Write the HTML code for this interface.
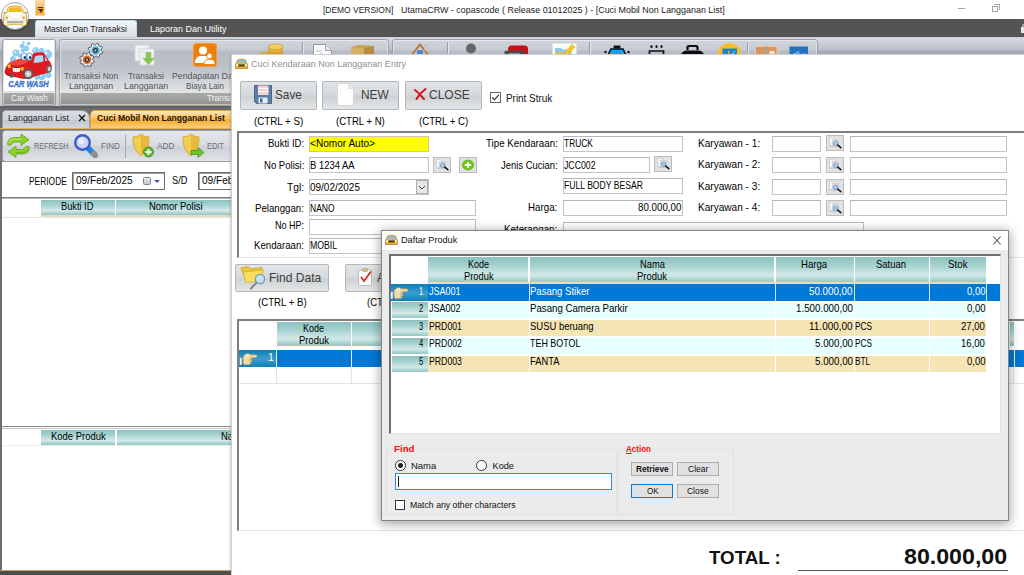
<!DOCTYPE html>
<html lang="id"><head><meta charset="utf-8"><title>UtamaCRW</title>
<style>
*{box-sizing:border-box;margin:0;padding:0}
html,body{width:1024px;height:575px;overflow:hidden;background:#fff}
body{position:relative;font-family:"Liberation Sans",sans-serif;font-size:11px;color:#000;line-height:1}
.a{position:absolute}
.t{position:absolute;white-space:pre;line-height:1;transform-origin:0 0}
svg{position:absolute;overflow:visible}
/* main window */
#titlebar{left:0;top:0;width:1024px;height:19px;background:#fff}
#darkbar{left:0;top:19px;width:1024px;height:18px;background:#545454}
#ribbon{left:0;top:37px;width:1024px;height:69px;background:linear-gradient(#c4c4c6 0,#d6d9e0 1px,#c8ccd4 7px,#b9bdc7 12.9px,#abafb9 13px,#a3a7af 17px,#b4b8c0 30px,#d4d7da 55px,#c8cacc 68px)}
.grp{border:1px solid #9a9ea6;border-radius:3px;background:linear-gradient(#d0d4db 0,#c6cad2 10px,#b7bbc5 11.500px,#bec2ca 28px,#dde1e1 50px,#e2e5e4 53.500px,#a9a9a9 53.500px,#8d8d8d 67px);box-shadow:inset 0 0 0 1px rgba(255,255,255,.45)}
.glab{color:#f4f4f4;font-size:11px}
.rtxt{color:#4a4a52;font-size:10.5px;text-align:center;line-height:11px}
#belowrib{left:0;top:106px;width:1024px;height:4px;background:linear-gradient(#5e5e5e,#707070)}
#tabrow{left:0;top:109px;width:1024px;height:21px;background:#d9dce1}
#toolbar{left:2px;top:130px;width:1022px;height:32px;border:1px solid #9b9fa6;border-radius:3px;background:linear-gradient(#e4e7eb 0,#d9dde2 45%,#cdd1d8 55%,#dfe2e6 100%)}
.tb{color:#6a6a70;font-size:9.5px}
.hdr{background:linear-gradient(#8cc2c0 0,#a7d3d1 35%,#d2e9e7 70%,#8fc5c3 100%);color:#111;text-align:center;font-size:11px}
/* form bits */
.fld{position:absolute;border:1px solid #c0c3ca;border-top-color:#b4b7be;background:#fff;height:16px;font-size:11px;line-height:14px;white-space:pre;padding-left:1px;overflow:hidden}
.lbl{position:absolute;font-size:11px;white-space:pre;text-align:right;line-height:12px}
.sbtn{position:absolute;width:18px;height:16px;border:1px solid #bcbcbc;background:#e2e2e2}
.bigbtn{position:absolute;height:29px;border:1px solid #b3b7bb;border-radius:2px;background:linear-gradient(#e2e5e7 0,#d7dadc 48%,#cdd1d3 52%,#e3e6e7 100%)}
.bigbtn .t{font-size:14.5px;color:#2f2f2f}
.sc{position:absolute;font-size:11px;white-space:pre;text-align:center;width:90px}
.row{position:absolute;left:0;height:18px;font-size:11px;line-height:17px;white-space:pre}
.cell{position:absolute;top:0;height:100%;overflow:hidden}
.wbtn{position:absolute;height:14px;border:1px solid #adadad;background:#e1e1e1;font-size:8.5px;text-align:center;line-height:12px;color:#111}
</style></head><body>
<div id="main" class="a" style="left:0;top:0;width:1024px;height:575px;overflow:hidden">
<div id="titlebar" class="a"></div>
<div class="t" style="left:322.6px;top:4.67px;font-size:9.6px;transform:scaleX(.88);color:#1a1a1a">[DEMO VERSION]</div><div class="t" style="left:400.5px;top:4.67px;font-size:9.6px;transform:scaleX(.93);color:#1a1a1a">UtamaCRW - copascode ( Release 01012025 ) - [Cuci Mobil Non Langganan List]</div>
<div class="a" style="left:958px;top:8px;width:7px;height:1px;background:#a6a6a6"></div>
<div class="a" style="left:992px;top:6px;width:6px;height:6px;border:1px solid #a2a2a2;background:#fdfdfd"></div>
<div class="a" style="left:994px;top:4px;width:6px;height:6px;border-top:1px solid #a8a8a8;border-right:1px solid #a8a8a8"></div>
<div id="darkbar" class="a"></div>
<div class="a" style="left:1021px;top:27px;width:6px;height:6px;background:#e6e6e6"></div><div class="a" style="left:1021.500px;top:22.500px;width:8px;height:8px;border:1.500px solid #e6e6e6;border-radius:4px"></div>
<!-- quick access -->
<div class="a" style="left:35px;top:0;width:10px;height:16px;background:linear-gradient(#fbdcae 0,#f9c079 6.500px,#f5a62c 7px,#f6ae3c 13px,#f9c66c 16px);border:1px solid #f0d3a6;border-top:0"></div>
<div class="a" style="left:38px;top:6.500px;width:5px;height:1.200px;background:#3a3a3a"></div>
<div class="a" style="left:38px;top:9px;width:5px;height:1.200px;background:#3a3a3a"></div>
<div class="a" style="left:38.500px;top:10px;width:0;height:0;border-left:2px solid transparent;border-right:2px solid transparent;border-top:3.500px solid #3a3a3a"></div>
<!-- active ribbon tab -->
<div class="a" style="left:35px;top:20px;width:102px;height:18px;background:linear-gradient(#f2f5f8,#e3e6ea 60%,#d9dce1);border-radius:3px 3px 0 0;border:1px solid #b9e0e6;border-bottom:0"></div>
<div class="t" style="left:44.4px;top:24.04px;font-size:9.4px;transform:scaleX(.91);color:#1c1c28">Master Dan Transaksi</div>
<div class="t" style="left:150px;top:24.04px;font-size:9.4px;transform:scaleX(.96);color:#fff">Laporan Dan Utility</div>
<div id="ribbon" class="a"></div>
<!-- orb -->
<div class="a" style="left:1px;top:2px;width:28px;height:28px;border-radius:50%;background:radial-gradient(circle at 50% 40%,#fff 0,#fcfcfc 60%,#e6e6e6 100%);border:1px solid #a9a9a9;box-shadow:0 1px 1.500px rgba(0,0,0,.35)"></div>
<svg style="left:3px;top:5px" width="25" height="22" viewBox="3 5 25 22">
<path d="M8 8.500 Q8.500 6.300 10.500 6.300 H19.700 Q21.700 6.300 22.300 8.500 L23.300 12 Q26.500 12.300 26.500 16 V23.500 Q26.500 25.300 25 25.300 H22.500 Q21.500 25.300 21.300 24.300 H9 Q8.800 25.300 7.800 25.300 H5.300 Q3.800 25.300 3.800 23.500 V16 Q3.800 12.300 7 12 Z" fill="#fdfdfa" stroke="#d9a826" stroke-width="1"/>
<path d="M9 8.700 Q9.300 7.300 10.700 7.300 H19.500 Q20.900 7.300 21.300 8.700 L22.200 11.900 H8.100 Z" fill="#f9b91e"/>
<path d="M3.600 12.600 H7 M23.300 12.600 H26.800" stroke="#b99a3a" stroke-width="1.300"/>
<path d="M8.500 13 Q10 18.300 12 18.500 H18.300 Q20.300 18.300 21.800 13" fill="none" stroke="#e9e6da" stroke-width=".9"/>
<circle cx="6.700" cy="17.800" r="1.300" fill="#cfa02c"/><circle cx="23.700" cy="17.800" r="1.300" fill="#cfa02c"/>
<circle cx="6.700" cy="17.800" r="2.300" fill="none" stroke="#e6e2d4" stroke-width=".7"/><circle cx="23.700" cy="17.800" r="2.300" fill="none" stroke="#e6e2d4" stroke-width=".7"/>
<rect x="7" y="21.200" width="16.400" height="1.900" fill="#a9ae98"/>
<path d="M5 20.500 H25.500 M5 23.700 H25.500" stroke="#d8d4c0" stroke-width=".6"/>
</svg>
<!-- group 1: Car Wash -->
<div class="a grp" style="left:2px;top:39px;width:54px;height:67px"></div>
<div class="a" style="left:3.500px;top:40px;width:50.500px;height:50.500px;background:#fff"></div>
<svg style="left:3px;top:40px" width="52" height="51" viewBox="3 40 52 51">
<g fill="#8fd0f6" stroke="#5fb4ea" stroke-width=".5"><circle cx="22" cy="46" r="2"/><circle cx="26" cy="48.500" r="2.600"/><circle cx="28.500" cy="43.500" r="1.600"/><circle cx="23.500" cy="42.500" r="1"/><circle cx="22.500" cy="50.500" r="1.500"/><circle cx="16" cy="53" r="3.200"/><circle cx="20.500" cy="56" r="2"/><circle cx="13" cy="59" r="2.600"/><circle cx="35.500" cy="50.500" r="3"/><circle cx="41.500" cy="50.500" r="2.200"/><circle cx="47.500" cy="54.500" r="4.300"/><circle cx="11" cy="63" r="1.500"/><circle cx="45" cy="71" r="3"/><circle cx="48.500" cy="75" r="2.600"/><circle cx="42" cy="76.500" r="3.200"/><circle cx="37" cy="77.500" r="2.200"/><circle cx="50" cy="66.500" r="2"/><circle cx="30" cy="88.500" r=".8"/></g>
<g fill="#fff" fill-opacity=".75"><circle cx="46" cy="53" r="1.500"/><circle cx="15" cy="52" r="1.100"/><circle cx="34.500" cy="49.500" r="1"/><circle cx="41" cy="75.500" r="1.100"/></g>
<path d="M4.500 72 Q5.500 66 9 63 Q14 60 22 58.500 Q26 58 30 60 L33 53.500 Q38 51.500 43.500 52.500 L48.500 60 Q52 63 51.500 68 Q51 72 47 73 L36 76 Q30 79 24 79 L12 76.500 Q5 76 4.500 72 Z" fill="#e01a1e"/>
<path d="M9 63 Q14 60 22 58.500 Q26 58 30 60 Q26 64 20 65.500 Q12 66 9 63 Z" fill="#f2443c"/>
<path d="M35 56.500 Q39 54.500 43 55.500 L43.500 61.500 Q39 62.500 33.500 63 Z" fill="#a6dcf6"/>
<path d="M45 56.500 L47.500 60.500 L45 61 Z" fill="#a6dcf6"/>
<ellipse cx="24" cy="56.500" rx="2.700" ry="3.700" fill="#fff" stroke="#2a74c8" stroke-width=".7"/><ellipse cx="29.600" cy="56.500" rx="2.700" ry="3.700" fill="#fff" stroke="#2a74c8" stroke-width=".7"/>
<ellipse cx="24.800" cy="57.500" rx="1.300" ry="1.800" fill="#1f5fb4"/><ellipse cx="30.200" cy="57.500" rx="1.300" ry="1.800" fill="#1f5fb4"/><circle cx="24.800" cy="57.800" r=".7" fill="#0a1a30"/><circle cx="30.200" cy="57.800" r=".7" fill="#0a1a30"/>
<path d="M12.500 67 Q16.500 68.500 20.500 67.500 L20 71.500 Q16 73 13 71.500 Z" fill="#fff"/><path d="M14.500 67.500 v4 M16.500 68 v4 M18.500 68 v4" stroke="#c8ccd0" stroke-width=".5"/>
<path d="M11 66 Q17 70 24 65" fill="none" stroke="#7a0a0e" stroke-width=".7"/>
<ellipse cx="9.300" cy="66.200" rx="1.500" ry="2" fill="#f8c820" stroke="#d89a10" stroke-width=".4"/><ellipse cx="22.400" cy="68.700" rx="1.500" ry="2" fill="#f8c820" stroke="#d89a10" stroke-width=".4"/>
<path d="M5 71 Q8 74.500 12 74.500 L12 76.500 Q6 76 5 71 Z" fill="#b01216"/>
<circle cx="28.200" cy="74" r="5.200" fill="#5c5c5c"/><circle cx="28.200" cy="74" r="3.300" fill="#c9c9c9"/><circle cx="28.200" cy="74" r="1.400" fill="#efefef"/>
<circle cx="11.500" cy="75.500" r="2.200" fill="#5c5c5c"/>
<ellipse cx="49" cy="69" rx="2.800" ry="3.800" fill="#6a6a6a"/><ellipse cx="49.300" cy="69" rx="1.500" ry="2.300" fill="#cfcfcf"/>
<text x="8.300" y="87" font-family="Liberation Sans,sans-serif" font-weight="bold" font-style="italic" font-size="9" fill="#3b7bd4" stroke="#2a5fb4" stroke-width=".3" textLength="40.400" lengthAdjust="spacingAndGlyphs">CAR WASH</text>
</svg>
<div class="t" style="left:10.6px;top:93.81px;font-size:9.2px;transform:scaleX(.91);color:#f4f4f4">Car Wash</div>
<!-- group 2 -->
<div class="a grp" style="left:59px;top:39px;width:330px;height:67px"></div><div class="a grp" style="left:392px;top:39px;width:426px;height:67px"></div>
<div class="t" style="left:206.9px;top:93.81px;font-size:9.2px;transform:scaleX(.91);color:#f4f4f4">Transaksi</div>
<!-- ribbon item 1 gears -->
<svg style="left:78px;top:42px" width="26" height="27" viewBox="0 0 26 27"><path d="M24.8 10.0 L24.3 11.4 L22.2 11.7 L21.5 12.5 L21.6 14.7 L20.3 15.3 L18.6 14.1 L17.5 14.2 L16.0 15.8 L14.6 15.3 L14.3 13.2 L13.5 12.5 L11.3 12.6 L10.7 11.3 L11.9 9.6 L11.8 8.5 L10.2 7.0 L10.7 5.6 L12.8 5.3 L13.5 4.5 L13.4 2.3 L14.7 1.7 L16.4 2.9 L17.5 2.8 L19.0 1.2 L20.4 1.7 L20.7 3.8 L21.5 4.5 L23.7 4.4 L24.3 5.7 L23.1 7.4 L23.2 8.5 Z" fill="#ececec" stroke="#4e4e4e" stroke-width=".9" stroke-linejoin="round"/><path d="M16.3 19.3 L15.8 20.7 L13.7 21.0 L13.0 21.8 L13.1 24.0 L11.8 24.6 L10.1 23.4 L9.0 23.5 L7.5 25.1 L6.1 24.6 L5.8 22.5 L5.0 21.8 L2.8 21.9 L2.2 20.6 L3.4 18.9 L3.3 17.8 L1.7 16.3 L2.2 14.9 L4.3 14.6 L5.0 13.8 L4.9 11.6 L6.2 11.0 L7.9 12.2 L9.0 12.1 L10.5 10.5 L11.9 11.0 L12.2 13.1 L13.0 13.8 L15.2 13.7 L15.8 15.0 L14.6 16.7 L14.7 17.8 Z" fill="#ececec" stroke="#4e4e4e" stroke-width=".9" stroke-linejoin="round"/><circle cx="17.500" cy="8.500" r="3.300" fill="#333" stroke="#3fb0e4" stroke-width="1.800"/><circle cx="9" cy="17.800" r="3.300" fill="#333" stroke="#e2661c" stroke-width="1.800"/><circle cx="17.500" cy="8.500" r="1" fill="#ddd"/><circle cx="9" cy="17.800" r="1" fill="#ddd"/></svg>
<div class="t" style="left:64.4px;top:71.06px;font-size:9.5px;transform:scaleX(.89);color:#55555c">Transaksi Non</div><div class="t" style="left:69.4px;top:81.06px;font-size:9.5px;transform:scaleX(.93);color:#55555c">Langganan</div>
<!-- ribbon item 2 docs w/ arrow -->
<svg style="left:134px;top:44px" width="22" height="23" viewBox="0 0 22 23"><rect x="1" y="1" width="14" height="16" fill="#f0f1f0" stroke="#d4d7d6"/><rect x="6" y="5" width="14" height="16" fill="#f4f5f4" stroke="#d4d7d6"/><path d="M3 5h9M3 8h9M3 11h3M8 9h10M8 12h10M8 15h10M8 18h10" stroke="#dfe2e0" stroke-width="1"/><path d="M12 8 h5 v6 h3.500 l-6 7 l-6 -7 h3.500 z" fill="#86c653" stroke="#a9d88a" stroke-width=".6"/></svg>
<div class="t" style="left:128.1px;top:71.06px;font-size:9.5px;transform:scaleX(.88);color:#55555c">Transaksi</div><div class="t" style="left:123.5px;top:81.06px;font-size:9.5px;transform:scaleX(.93);color:#55555c">Langganan</div>
<!-- ribbon item 3 orange people -->
<div class="a" style="left:193px;top:43px;width:24px;height:24px;background:#f07f09;border-radius:3px;border:1px solid #f59a3c"></div>
<svg style="left:193px;top:43px" width="24" height="24" viewBox="0 0 24 24"><circle cx="10" cy="7.500" r="4" fill="#fff"/><path d="M2 20 Q2 14 7 13 L13 13 Q16 14 16 17 L12 20 Z" fill="#fff"/><circle cx="16.500" cy="13" r="2.700" fill="#fff" stroke="#f07f09" stroke-width=".8"/><path d="M11 21.500 Q11 17 14 16.500 L19 16.500 Q22 17 22 21.500 Z" fill="#fff" stroke="#f07f09" stroke-width=".8"/></svg>
<div class="t" style="left:172.1px;top:71.06px;font-size:9.5px;transform:scaleX(.92);color:#55555c">Pendapatan Dan</div><div class="t" style="left:186px;top:81.06px;font-size:9.5px;transform:scaleX(.86);color:#55555c">Biaya Lain</div>
<!-- partially visible icons row (y 38-55) -->
<div class="a" style="left:302px;top:42px;width:2px;height:48px;background:linear-gradient(90deg,#989ca4 50%,#e4e7ea 50%)"></div>
<div class="a" style="left:447px;top:42px;width:2px;height:48px;background:linear-gradient(90deg,#989ca4 50%,#e4e7ea 50%)"></div>
<div class="a" style="left:589px;top:42px;width:2px;height:48px;background:linear-gradient(90deg,#989ca4 50%,#e4e7ea 50%)"></div>
<div class="a" style="left:747px;top:42px;width:2px;height:48px;background:linear-gradient(90deg,#989ca4 50%,#e4e7ea 50%)"></div>
<svg style="left:0;top:37px" width="1024" height="20" viewBox="0 37 1024 20">
<g stroke="#c8901c" stroke-width=".6"><ellipse cx="265" cy="55" rx="6.500" ry="2.600" fill="#e8b030"/><ellipse cx="275.500" cy="53" rx="7.300" ry="2.800" fill="#dca324"/><ellipse cx="275.500" cy="50" rx="7.300" ry="2.800" fill="#e9b534"/><ellipse cx="275.500" cy="46.800" rx="7.300" ry="2.800" fill="#f4cf5c"/></g>
<path d="M313.500 44.500 h12 l6 6 v8 h-18 z" fill="#fbfbfb" stroke="#8e8e8e" stroke-width=".9"/><path d="M325.500 44.500 v6 h6" fill="#e8e8e8" stroke="#8e8e8e" stroke-width=".8"/><path d="M316 51h6" stroke="#aaa" stroke-width=".8"/><circle cx="321" cy="54.500" r="1" fill="#3a6ac8"/>
<path d="M351 47 l8 -2 l15 1 v11 h-23 z" fill="#c9a050"/><path d="M351 47 l13 1.500 v9 h-13 z" fill="#d6b064"/><path d="M364 48.500 l10 -2.500 v11 h-10 z" fill="#b88c3c"/>
<path d="M410.500 56.500 L420 44.500 L429.500 56.500" fill="none" stroke="#b5773a" stroke-width="2"/><rect x="424.500" y="45.500" width="1.800" height="5" fill="#e8dcc8" stroke="#b0a088" stroke-width=".4"/><path d="M414 57 L420 49 L426 57 Z" fill="#f3f0ea"/><rect x="417.500" y="50.500" width="5" height="4.500" rx=".8" fill="#3a8ae0" stroke="#2a62b0" stroke-width=".6"/>
<circle cx="471" cy="48.500" r="5" fill="#666"/>
<path d="M508 49 q0 -3.500 3.500 -3.500 h13 q3.500 0 3.500 3.500 v8 h-20 z" fill="#c8101c"/><rect x="504.500" y="50.800" width="20.500" height="7" rx="1" fill="#4a4a4a"/><rect x="509" y="53.500" width="11" height="4" fill="#c9c9c9"/>
<rect x="552.500" y="43.500" width="24" height="14" fill="#fdfdf8" stroke="#e0e0d8" stroke-width=".6"/><path d="M555 48 h6 l1.500 1.500 h9 v8 h-16.500 z" fill="#8fc4ee"/><rect x="556" y="52" width="7" height="5" fill="#d8c83a"/><path d="M562 55.500 L572 44.500 L575 47 L565 58 Z" fill="#f6c818" stroke="#d8a010" stroke-width=".5"/>
<path d="M608 55 L611 49 h12 l3 6 Z" fill="#1aa0ec" stroke="#111" stroke-width="1.500"/><rect x="613.500" y="45.500" width="7" height="3" rx="1" fill="#111"/><circle cx="605.500" cy="52" r="1.200" fill="#111"/><circle cx="628.500" cy="52" r="1.200" fill="#111"/><path d="M606 55.500 h22" stroke="#111" stroke-width="1.500"/>
<path d="M649.500 57 v-6 h14 v6" fill="none" stroke="#111" stroke-width="1.700"/><ellipse cx="651.500" cy="46.500" rx="1.100" ry="1.600" fill="#111"/><ellipse cx="656.500" cy="46.500" rx="1.100" ry="1.600" fill="#111"/><ellipse cx="661.500" cy="46.500" rx="1.100" ry="1.600" fill="#111"/>
<path d="M680 57 Q681 51.500 686 50.500 h13 Q704 51.500 705 57 Z" fill="#0c0c0c"/><path d="M687.500 50 v-2.500 q0 -1.500 1.500 -1.500 h7 q1.500 0 1.500 1.500 v2.500" fill="none" stroke="#0c0c0c" stroke-width="2.200"/>
<circle cx="729.400" cy="55" r="12" fill="#f6bc2c"/><rect x="722.500" y="48.500" width="14.500" height="9" fill="#1f86c4"/><rect x="728" y="50.500" width="1.500" height="4" fill="#f2a23a"/><path d="M732 54 l3 -3" stroke="#d8eefc" stroke-width=".8"/>
<rect x="755.500" y="46.500" width="21.500" height="12" rx="2" fill="#d9955a" stroke="#eec9a6" stroke-width="1"/><rect x="763.500" y="46.500" width="4.500" height="12" fill="#b8a090" fill-opacity=".75"/><rect x="769.500" y="51" width="5" height="4" fill="#efe6da"/>
<rect x="789.500" y="46.500" width="18.500" height="12" fill="#2272c0"/><path d="M794 58 v-4 l4.500 -2 v6 M800 58 v-3.500 h4 l1 -1.500" fill="none" stroke="#8ab6e2" stroke-width="1.300"/>
</svg>
<div id="belowrib" class="a"></div>
<!-- document tabs -->
<div id="tabrow" class="a" style="background:#6c6c6c"></div>
<div class="a" style="left:2px;top:110px;width:88px;height:18px;background:linear-gradient(#d9dce2,#cfd3da 50%,#c3c7cf 55%,#d3d6dc);border:1px solid #9a9ea6;border-bottom:0;border-radius:4px 8px 0 0"></div>
<div class="t" style="left:7.8px;top:113.63px;font-size:9.3px;transform:scaleX(.96);color:#1e1e2c">Langganan List</div>
<svg style="left:78px;top:114px" width="8" height="8" viewBox="0 0 8 8"><path d="M1 1 L7 7 M7 1 L1 7" stroke="#111" stroke-width="1.3"/></svg>
<div class="a" style="left:90px;top:110px;width:146px;height:20px;background:linear-gradient(#fde7c0 0,#fbc45e 35%,#f9b23a 55%,#fdd68c 100%);border:1px solid #e2a24a;border-bottom:0;border-radius:5px 5px 0 0"></div>
<div class="t" style="left:96.5px;top:113.63px;font-size:9.3px;transform:scaleX(.92);font-weight:bold;color:#17130a">Cuci Mobil Non Langganan List</div>
<div class="a" style="left:0;top:128px;width:1024px;height:1px;background:#f0b050"></div>
<div class="a" style="left:0;top:129px;width:1024px;height:2px;background:#7a7a7a"></div>
<!-- toolbar -->
<div class="a" style="left:0;top:130px;width:1024px;height:33px;background:#787878"></div>
<div id="toolbar" class="a"></div>
<svg style="left:6px;top:133px" width="25" height="26" viewBox="0 0 25 26"><path d="M1.500 11.500 Q1.500 4.500 9 4.500 L15 4.500 L15 1 L23 6.700 L15 12.400 L15 9 L9 9 Q6 9 5.800 11.500 Q3.500 12.800 1.500 11.500 Z" fill="#8fd12c" stroke="#62a314" stroke-width=".8"/><path d="M23.500 14 Q23.500 21 16 21 L10 21 L10 24.500 L2 18.800 L10 13.100 L10 16.500 L16 16.500 Q19 16.500 19.200 14 Q21.500 12.700 23.500 14 Z" fill="#8fd12c" stroke="#62a314" stroke-width=".8"/><path d="M3 10 Q3.500 6 9 6 L15.500 6" stroke="#c4ec7a" stroke-width="1" fill="none"/><path d="M22 15.500 Q21.500 19.500 16 19.500 L9.500 19.500" stroke="#6fb01c" stroke-width="1" fill="none"/></svg>
<div class="t" style="left:33.5px;top:141.89px;font-size:8.4px;transform:scaleX(.86);color:#6a6a72">REFRESH</div>
<svg style="left:73px;top:133px" width="27" height="27" viewBox="0 0 27 27"><path d="M14 14 L22 22" stroke="#1c86e0" stroke-width="5.600" stroke-linecap="round"/><path d="M20.800 20.800 L22.300 22.300" stroke="#909090" stroke-width="5.600" stroke-linecap="round"/><circle cx="9.500" cy="9.500" r="7.300" fill="#cdd0fa" stroke="#3a5ccc" stroke-width="2.400"/><circle cx="8.300" cy="8" r="3.300" fill="#e6e6ff"/></svg>
<div class="t" style="left:101px;top:141.89px;font-size:8.4px;transform:scaleX(.96);color:#6a6a72">FIND</div>
<div class="a" style="left:125px;top:135px;width:1px;height:23px;background:#a6aab0"></div>
<svg style="left:131px;top:133px" width="24" height="26" viewBox="0 0 24 26"><path d="M2 4 Q7 4 10 1 Q13 4 18 4 Q19 16 10 23 Q1 16 2 4 Z" fill="#f2cd52" stroke="#c9a02a" stroke-width=".8"/><path d="M10 1 Q13 4 18 4 Q19 16 10 23 Z" fill="#e6b93a"/><circle cx="17.500" cy="19" r="5" fill="#5cb82e" stroke="#2f8a12" stroke-width=".8"/><path d="M17.500 16 v6 M14.500 19 h6" stroke="#fff" stroke-width="1.800"/></svg>
<div class="t" style="left:157px;top:141.89px;font-size:8.4px;transform:scaleX(.98);color:#6a6a72">ADD</div>
<svg style="left:181px;top:133px" width="24" height="26" viewBox="0 0 24 26"><path d="M2 4 Q7 4 10 1 Q13 4 18 4 Q19 16 10 23 Q1 16 2 4 Z" fill="#f2cd52" stroke="#c9a02a" stroke-width=".8"/><path d="M10 1 Q13 4 18 4 Q19 16 10 23 Z" fill="#e6b93a"/><path d="M10 17.500 h7 v-3 l6 5 l-6 5 v-3 h-7 z" fill="#6cc430" stroke="#3a8f14" stroke-width=".7"/></svg>
<div class="t" style="left:207px;top:141.89px;font-size:8.4px;transform:scaleX(.88);color:#6a6a72">EDIT</div>
<!-- content -->
<div class="a" style="left:0;top:162px;width:2px;height:413px;background:#6e6e6e"></div>
<div class="a" style="left:2px;top:162px;width:1022px;height:409px;background:#fff"></div>
<div class="t" style="left:28.8px;top:176.11px;font-size:10.5px;transform:scaleX(.8);">PERIODE</div>
<div class="a" style="left:72px;top:172px;width:93px;height:18px;border:1px solid #6d6d6d;box-shadow:inset 1px 1px 0 #a0a0a0;background:#fff"></div>
<div class="t" style="left:75.5px;top:175.41px;font-size:10.5px;transform:scaleX(.96);">09/Feb/2025</div>
<div class="a" style="left:143px;top:177px;width:8px;height:8px;border:1px solid #7f848c;border-radius:1.500px;background:linear-gradient(#e8eaee,#bfc4cc)"></div>
<div class="a" style="left:154px;top:180px;width:0;height:0;border-left:3px solid transparent;border-right:3px solid transparent;border-top:3px solid #3a5a9a"></div>
<div class="t" style="left:172px;top:174.91px;font-size:10.5px;transform:scaleX(.88);">S/D</div>
<div class="a" style="left:198px;top:172px;width:93px;height:18px;border:1px solid #6d6d6d;box-shadow:inset 1px 1px 0 #a0a0a0;background:#fff"></div>
<div class="t" style="left:202px;top:175.41px;font-size:10.5px;transform:scaleX(.96);">09/Feb/2025</div>
<div class="a" style="left:2px;top:197px;width:1022px;height:2px;background:linear-gradient(#7c7c7c 50%,#b9b9b9 50%)"></div>
<div class="a hdr" style="left:41px;top:200px;width:74px;height:15px"></div><div class="t" style="left:61.3px;top:201.11px;font-size:10.5px;transform:scaleX(.88);">Bukti ID</div>
<div class="a hdr" style="left:116px;top:200px;width:150px;height:15px"></div><div class="t" style="left:148.8px;top:201.11px;font-size:10.5px;transform:scaleX(.9);">Nomor Polisi</div>
<div class="a" style="left:41px;top:215px;width:225px;height:1.500px;background:#e9dcb8"></div>
<div class="a" style="left:2px;top:217px;width:1022px;height:1px;background:#e6e6e6"></div>
<div class="a" style="left:2px;top:426px;width:1022px;height:1px;background:#8a8a8a"></div>
<div class="a" style="left:2px;top:428px;width:1022px;height:1px;background:#c8c8c8"></div>
<div class="a hdr" style="left:41px;top:430px;width:74px;height:15px"></div><div class="t" style="left:50.7px;top:430.51px;font-size:10.5px;transform:scaleX(.9);">Kode Produk</div>
<div class="a hdr" style="left:117px;top:430px;width:230px;height:15px"></div><div class="t" style="left:221.3px;top:430.51px;font-size:10.5px;transform:scaleX(.9);">Nama Produk</div>
<div class="a" style="left:2px;top:445px;width:1022px;height:1px;background:#ececec"></div>
<div class="a" style="left:0;top:570px;width:1024px;height:1px;background:#c8a070"></div>
<div class="a" style="left:0;top:571px;width:1024px;height:4px;background:#4e4e4e"></div>
</div>

<div id="entry" class="a" style="left:228px;top:54px;width:796px;height:521px;overflow:hidden;background:linear-gradient(90deg,rgba(120,120,120,0) 0,rgba(120,120,120,.25) 3px,#9a9a9a 3px,#fff 4px)">
<div class="a" style="left:4px;top:0;width:792px;height:1px;background:#cdcfd4"></div>
<div class="a" style="left:4px;top:1px;width:792px;height:520px;background:#fff"></div>
</div>
<!-- entry contents in page coords -->
<svg style="left:235px;top:59px" width="13" height="10" viewBox="0 0 13 10"><path d="M2.500 1 Q6.500 -0.500 10.500 1 L11.500 4 Q13 4.500 12.500 7 V9.500 H.5 V7 Q0 4.500 1.500 4 Z" fill="#f0b030" stroke="#8a6a2a" stroke-width=".6"/><path d="M3 1.500 Q6.500 0.300 10 1.500 L10.800 3.800 H2.200 Z" fill="#7fc4e8"/><rect x="3.500" y="5.500" width="6" height="2" fill="#3a3a2a"/><rect x=".8" y="5.300" width="2.200" height="1.800" fill="#fff3b0"/><rect x="10" y="5.300" width="2.200" height="1.800" fill="#fff3b0"/></svg>
<div class="t" style="left:250.7px;top:58.87px;font-size:9.6px;transform:scaleX(.94);color:#8f8f8f">Cuci Kendaraan Non Langganan Entry</div>
<!-- big buttons -->
<div class="bigbtn" style="left:240px;top:81px;width:77px"></div>
<div class="bigbtn" style="left:322px;top:81px;width:77px"></div>
<div class="bigbtn" style="left:405px;top:81px;width:77px"></div>
<svg style="left:253.500px;top:85px" width="18" height="19" viewBox="0 0 18 19"><path d="M.5 .5 H17.500 V18.500 H2.500 L.5 16.500 Z" fill="#5b7fa8" stroke="#46668c" stroke-width="1"/><rect x="4" y=".5" width="10.500" height="9.500" fill="#f9d2cf"/><path d="M4 3.500h10.500M4 6.500h10.500" stroke="#fff" stroke-width="1.200"/><rect x="4.500" y="12.500" width="9" height="6" fill="#e8ecf2"/><rect x="6" y="13.500" width="2.500" height="4" fill="#4b6a92"/></svg>
<div class="t" style="left:274.9px;top:89.2px;font-size:12.4px;transform:scaleX(.95);color:#3c3c3c">Save</div>
<svg style="left:337px;top:83px" width="17" height="23" viewBox="0 0 17 23"><path d="M.5 .5 H11.500 L16.500 5.500 V22.500 H.5 Z" fill="#fdfdfd" stroke="#d4d6d8" stroke-width="1"/><path d="M11.500 .5 V5.500 H16.500 Z" fill="#e9ebec" stroke="#d4d6d8" stroke-width=".8"/></svg>
<div class="t" style="left:360.8px;top:89.2px;font-size:12.4px;transform:scaleX(.96);color:#3c3c3c">NEW</div>
<svg style="left:414px;top:88px" width="13" height="12" viewBox="0 0 13 12"><path d="M1 2 Q5 5 10 11 M11.500 1 Q6 5 2.500 11" stroke="#d2161e" stroke-width="2.100" fill="none" stroke-linecap="round"/></svg>
<div class="t" style="left:429.3px;top:89.2px;font-size:12.4px;transform:scaleX(.97);color:#3c3c3c">CLOSE</div>
<div class="a" style="left:490px;top:92px;width:11px;height:11px;border:1px solid #666;background:#fff"></div>
<svg style="left:490px;top:92px" width="11" height="11" viewBox="0 0 11 11"><path d="M2.300 5.500 L4.500 7.800 L8.800 2.800" stroke="#222" stroke-width="1.100" fill="none"/></svg>
<div class="t" style="left:506px;top:93.87px;font-size:10.2px;transform:scaleX(.97);color:#111">Print Struk</div>
<div class="t" style="left:253.8px;top:116.01px;font-size:10.5px;transform:scaleX(.93);">(CTRL + S)</div>
<div class="t" style="left:336.4px;top:116.01px;font-size:10.5px;transform:scaleX(.91);">(CTRL + N)</div>
<div class="t" style="left:418.5px;top:116.01px;font-size:10.5px;transform:scaleX(.92);">(CTRL + C)</div>
<!-- panel -->
<div class="a" style="left:237px;top:131px;width:800px;height:127px;border:2px solid #7e7e7e;border-right:0;border-bottom:1px solid #e3e3e3;background:#fff"></div>
<!-- left column -->
<div class="t" style="left:267.5px;top:138.01px;font-size:10.5px;transform:scaleX(.91);">Bukti ID:</div>
<div class="t" style="left:263.8px;top:159.51px;font-size:10.5px;transform:scaleX(.91);">No Polisi:</div>
<div class="t" style="left:286.8px;top:181.51px;font-size:10.5px;transform:scaleX(.98);">Tgl:</div>
<div class="t" style="left:255px;top:202.81px;font-size:10.5px;transform:scaleX(.92);">Pelanggan:</div>
<div class="t" style="left:274.8px;top:220.31px;font-size:10.5px;transform:scaleX(.86);">No HP:</div>
<div class="t" style="left:253.8px;top:239.51px;font-size:10.5px;transform:scaleX(.92);">Kendaraan:</div>
<div class="a" style="left:309px;top:136px;width:120px;height:16px;background:#ffff00;border:1px solid #c9c9a4"></div>
<div class="t" style="left:310.3px;top:138.01px;font-size:10.5px;transform:scaleX(.96);">&lt;Nomor Auto&gt;</div>
<div class="fld" style="left:309px;top:157px;width:120px"></div>
<div class="t" style="left:310.3px;top:159.51px;font-size:10.5px;transform:scaleX(.9);">B 1234 AA</div>
<div class="sbtn" style="left:433px;top:157px"></div><svg style="left:434px;top:158px" width="16" height="14" viewBox="0 0 16 14"><rect x="2.500" y="1.500" width="5" height="8" fill="#f4f5f7" stroke="#c4c7cc" stroke-width=".6"/><rect x="5.500" y="3.500" width="6" height="6.500" fill="#eceef1" stroke="#c4c7cc" stroke-width=".6"/><path d="M2.500 10.300h8" stroke="#b8bbc0" stroke-width=".6"/><circle cx="8.700" cy="7.200" r="2.500" fill="#9cc8ea" stroke="#8a98a8" stroke-width=".8"/><path d="M10.800 9.200 L13.800 11.600" stroke="#1a1a1a" stroke-width="1.700" stroke-linecap="round"/></svg><div class="sbtn" style="left:459px;top:157px"></div><svg style="left:460px;top:158px" width="16" height="14" viewBox="0 0 16 14"><ellipse cx="8" cy="7" rx="5.800" ry="5" fill="#6cc81e" stroke="#58b010" stroke-width=".6"/><path d="M8 4.200 v5.600 M4.800 7 h6.400" stroke="#f4fbe8" stroke-width="2"/></svg>
<div class="fld" style="left:309px;top:179px;width:120px"></div>
<div class="a" style="left:416px;top:180px;width:12px;height:14px;border:1px solid #adadad;background:#e6e6e6"></div>
<svg style="left:418px;top:185px" width="8" height="5" viewBox="0 0 8 5"><path d="M1 1 L4 4 L7 1" fill="none" stroke="#444" stroke-width="1"/></svg>
<div class="t" style="left:310.3px;top:181.51px;font-size:10.5px;transform:scaleX(.95);">09/02/2025</div>
<div class="fld" style="left:309px;top:200px;width:167px"></div>
<div class="t" style="left:310.3px;top:202.81px;font-size:10.5px;transform:scaleX(.81);">NANO</div>
<div class="fld" style="left:309px;top:219px;width:167px"></div>
<div class="fld" style="left:309px;top:238px;width:167px"></div>
<div class="t" style="left:310.3px;top:239.51px;font-size:10.5px;transform:scaleX(.83);">MOBIL</div>
<!-- middle column -->
<div class="t" style="left:485.5px;top:137.81px;font-size:10.5px;transform:scaleX(.93);">Tipe Kendaraan:</div>
<div class="t" style="left:500.5px;top:159.51px;font-size:10.5px;transform:scaleX(.9);">Jenis Cucian:</div>
<div class="t" style="left:528.3px;top:201.51px;font-size:10.5px;transform:scaleX(.93);">Harga:</div>
<div class="t" style="left:504.3px;top:224.41px;font-size:10.5px;transform:scaleX(.93);">Keterangan:</div>
<div class="fld" style="left:563px;top:136px;width:120px"></div>
<div class="t" style="left:564.3px;top:137.81px;font-size:10.5px;transform:scaleX(.8);">TRUCK</div>
<div class="fld" style="left:563px;top:157px;width:87px"></div>
<div class="t" style="left:564.3px;top:159.51px;font-size:10.5px;transform:scaleX(.83);">JCC002</div>
<div class="sbtn" style="left:653.500px;top:156px"></div><svg style="left:654.5px;top:157px" width="16" height="14" viewBox="0 0 16 14"><rect x="2.500" y="1.500" width="5" height="8" fill="#f4f5f7" stroke="#c4c7cc" stroke-width=".6"/><rect x="5.500" y="3.500" width="6" height="6.500" fill="#eceef1" stroke="#c4c7cc" stroke-width=".6"/><path d="M2.500 10.300h8" stroke="#b8bbc0" stroke-width=".6"/><circle cx="8.700" cy="7.200" r="2.500" fill="#9cc8ea" stroke="#8a98a8" stroke-width=".8"/><path d="M10.800 9.200 L13.800 11.600" stroke="#1a1a1a" stroke-width="1.700" stroke-linecap="round"/></svg>
<div class="fld" style="left:563px;top:178px;width:120px"></div>
<div class="t" style="left:564.3px;top:180.31px;font-size:10.5px;transform:scaleX(.82);">FULL BODY BESAR</div>
<div class="fld" style="left:563px;top:199.500px;width:120px"></div>
<div class="t" style="left:638.3px;top:201.51px;font-size:10.5px;transform:scaleX(.93);">80.000,00</div>
<div class="fld" style="left:563px;top:222px;width:301px"></div>
<!-- right column -->
<div class="t" style="left:697.5px;top:137.71px;font-size:10.5px;transform:scaleX(.96);">Karyawan - 1:</div>
<div class="t" style="left:697.5px;top:159.21px;font-size:10.5px;transform:scaleX(.96);">Karyawan - 2:</div>
<div class="t" style="left:697.5px;top:181.41px;font-size:10.5px;transform:scaleX(.96);">Karyawan - 3:</div>
<div class="t" style="left:697.5px;top:202.21px;font-size:10.5px;transform:scaleX(.96);">Karyawan - 4:</div>
<div class="fld" style="left:772px;top:136px;width:49px"></div><div class="sbtn" style="left:826px;top:135px"></div><svg style="left:827px;top:136px" width="16" height="14" viewBox="0 0 16 14"><rect x="2.500" y="1.500" width="5" height="8" fill="#f4f5f7" stroke="#c4c7cc" stroke-width=".6"/><rect x="5.500" y="3.500" width="6" height="6.500" fill="#eceef1" stroke="#c4c7cc" stroke-width=".6"/><path d="M2.500 10.300h8" stroke="#b8bbc0" stroke-width=".6"/><circle cx="8.700" cy="7.200" r="2.500" fill="#9cc8ea" stroke="#8a98a8" stroke-width=".8"/><path d="M10.800 9.200 L13.800 11.600" stroke="#1a1a1a" stroke-width="1.700" stroke-linecap="round"/></svg><div class="fld" style="left:849.500px;top:136px;width:157px"></div>
<div class="fld" style="left:772px;top:157px;width:49px"></div><div class="sbtn" style="left:826px;top:157px"></div><svg style="left:827px;top:158px" width="16" height="14" viewBox="0 0 16 14"><rect x="2.500" y="1.500" width="5" height="8" fill="#f4f5f7" stroke="#c4c7cc" stroke-width=".6"/><rect x="5.500" y="3.500" width="6" height="6.500" fill="#eceef1" stroke="#c4c7cc" stroke-width=".6"/><path d="M2.500 10.300h8" stroke="#b8bbc0" stroke-width=".6"/><circle cx="8.700" cy="7.200" r="2.500" fill="#9cc8ea" stroke="#8a98a8" stroke-width=".8"/><path d="M10.800 9.200 L13.800 11.600" stroke="#1a1a1a" stroke-width="1.700" stroke-linecap="round"/></svg><div class="fld" style="left:849.500px;top:157px;width:157px"></div>
<div class="fld" style="left:772px;top:179px;width:49px"></div><div class="sbtn" style="left:826px;top:179px"></div><svg style="left:827px;top:180px" width="16" height="14" viewBox="0 0 16 14"><rect x="2.500" y="1.500" width="5" height="8" fill="#f4f5f7" stroke="#c4c7cc" stroke-width=".6"/><rect x="5.500" y="3.500" width="6" height="6.500" fill="#eceef1" stroke="#c4c7cc" stroke-width=".6"/><path d="M2.500 10.300h8" stroke="#b8bbc0" stroke-width=".6"/><circle cx="8.700" cy="7.200" r="2.500" fill="#9cc8ea" stroke="#8a98a8" stroke-width=".8"/><path d="M10.800 9.200 L13.800 11.600" stroke="#1a1a1a" stroke-width="1.700" stroke-linecap="round"/></svg><div class="fld" style="left:849.500px;top:179px;width:157px"></div>
<div class="fld" style="left:772px;top:200px;width:49px"></div><div class="sbtn" style="left:826px;top:200px"></div><svg style="left:827px;top:201px" width="16" height="14" viewBox="0 0 16 14"><rect x="2.500" y="1.500" width="5" height="8" fill="#f4f5f7" stroke="#c4c7cc" stroke-width=".6"/><rect x="5.500" y="3.500" width="6" height="6.500" fill="#eceef1" stroke="#c4c7cc" stroke-width=".6"/><path d="M2.500 10.300h8" stroke="#b8bbc0" stroke-width=".6"/><circle cx="8.700" cy="7.200" r="2.500" fill="#9cc8ea" stroke="#8a98a8" stroke-width=".8"/><path d="M10.800 9.200 L13.800 11.600" stroke="#1a1a1a" stroke-width="1.700" stroke-linecap="round"/></svg><div class="fld" style="left:849.500px;top:200px;width:157px"></div>
<!-- find data / add buttons -->
<div class="bigbtn" style="left:235px;top:263.500px;width:94px;height:28px"></div>
<div class="bigbtn" style="left:344.500px;top:263.500px;width:93px;height:28px"></div>
<svg style="left:240px;top:265px" width="27" height="25" viewBox="0 0 27 25"><path d="M1 3 L8 1.500 L11 4 L22 2.500 L20 15 L6 17 Z" fill="#e9c63a" stroke="#c6a21c" stroke-width=".7"/><path d="M3 7 L24 5 L20 16 L6 17.500 Z" fill="#f6de62" stroke="#d2b02a" stroke-width=".7"/><path d="M17 17 L11 23.500" stroke="#8a8a8a" stroke-width="2.200" stroke-linecap="round"/><circle cx="20" cy="14" r="4.600" fill="#bfe3f4" stroke="#7a9ab0" stroke-width="1.300"/></svg>
<div class="t" style="left:269.3px;top:272.07px;font-size:12.2px;transform:scaleX(.99);color:#3c3c3c">Find Data</div>
<svg style="left:358px;top:268px" width="15" height="18" viewBox="0 0 15 18"><rect x=".5" y="2" width="13" height="15.500" rx="1" fill="#fbfbfb" stroke="#b9b9b9"/><rect x="4.500" y=".5" width="5" height="3" rx=".8" fill="#d9c28a" stroke="#a89058" stroke-width=".6"/><path d="M3 9 L6 13 L13 3.500" stroke="#d22" stroke-width="1.700" fill="none"/></svg>
<div class="t" style="left:377.3px;top:272.07px;font-size:12.2px;transform:scaleX(.93);color:#3c3c3c">Add</div>
<div class="t" style="left:257.5px;top:297.01px;font-size:10.5px;transform:scaleX(.92);">(CTRL + B)</div>
<div class="t" style="left:366.8px;top:297.01px;font-size:10.5px;transform:scaleX(.9);">(CTRL + A)</div>
<!-- entry grid -->
<div class="a" style="left:237px;top:318.500px;width:800px;height:212px;border:2px solid #7e7e7e;border-right:0;border-bottom:1px solid #e3e3e3;background:#fff"></div>
<div class="a hdr" style="left:277px;top:321.500px;width:73.500px;height:24px"></div>
<div class="a hdr" style="left:352px;top:321.500px;width:200px;height:24px"></div>
<div class="a hdr" style="left:1010px;top:321.500px;width:3.500px;height:24px"></div>
<div class="t" style="left:303px;top:322.81px;font-size:10.5px;transform:scaleX(.85);">Kode</div>
<div class="t" style="left:298.5px;top:334.51px;font-size:10.5px;transform:scaleX(.9);">Produk</div>
<div class="a" style="left:239px;top:350px;width:790px;height:17px;background:#0078d7"></div>
<div class="a hdr" style="left:239px;top:350px;width:36.500px;height:17px;background:linear-gradient(#0c7fb4,#3c9cd0 55%,#0e80b6)"></div>
<div class="a" style="left:275.500px;top:350px;width:1px;height:17px;background:#e8f0fa"></div>
<div class="a" style="left:351px;top:350px;width:1px;height:17px;background:#e8f0fa"></div>
<div class="a" style="left:1013.500px;top:350px;width:1px;height:17px;background:#e8f0fa"></div>
<div class="t" style="left:268px;top:352.31px;font-size:10.5px;color:#fff">1</div>
<svg style="left:238.5px;top:351.5px" width="20" height="14" viewBox="0 0 20 14"><rect x="0.500" y="5.500" width="2.500" height="7.500" fill="#f4f6f8" stroke="#3a6ab8" stroke-width=".5"/><path d="M4.200 5 Q5 2.500 8 1.800 Q10 1.500 11 2.800 L17 3 Q18 3.200 18 4.300 Q18 5.400 17 5.500 L11.800 5.700 Q12.600 6.200 12.400 7.200 Q13 8 12.400 8.800 Q12.800 9.800 12 10.400 Q12 11.800 10.800 12.200 L6 12.800 Q4.200 12.500 4.200 10.500 Z" fill="#ecdcae" stroke="#d9a050" stroke-width=".7"/><path d="M10 7.200h2.200M10 8.900h2.200M10 10.500h1.800" stroke="#c8873a" stroke-width=".6"/><path d="M6 4 Q8 2.500 10 3" stroke="#fff" stroke-width=".8" fill="none"/></svg>
<div class="a" style="left:239px;top:382.500px;width:790px;height:1px;background:#e4e4e4"></div>
<div class="a" style="left:275.500px;top:366.500px;width:1px;height:16px;background:#e4e4e4"></div>
<div class="a" style="left:351px;top:366.500px;width:1px;height:16px;background:#e4e4e4"></div>
<div class="a" style="left:1013px;top:366.500px;width:1px;height:16px;background:#e4e4e4"></div>
<!-- total -->
<div class="t" style="left:709px;top:549.36px;font-size:18px;transform:scaleX(1.04);font-weight:bold;color:#111">TOTAL :</div>
<div class="t" style="left:904.3px;top:545.55px;font-size:22.5px;transform:scaleX(1.03);font-weight:bold;color:#111">80.000,00</div>
<div class="a" style="left:798px;top:569.500px;width:210px;height:1px;background:#555"></div>

<div id="prod" class="a" style="left:381px;top:230px;width:628px;height:291px;background:#ebebeb;border:1px solid #858585;box-shadow:0 2px 10px 1px rgba(0,0,0,.36)"></div>
<div class="a" style="left:382px;top:231px;width:626px;height:19px;background:#fff"></div>
<svg style="left:385px;top:235px" width="13" height="10" viewBox="0 0 13 10"><path d="M2.500 1 Q6.500 -0.500 10.500 1 L11.500 4 Q13 4.500 12.500 7 V9.500 H.5 V7 Q0 4.500 1.500 4 Z" fill="#f0b030" stroke="#8a6a2a" stroke-width=".6"/><path d="M3 1.500 Q6.500 0.300 10 1.500 L10.800 3.800 H2.200 Z" fill="#7fc4e8"/><rect x="3.500" y="5.500" width="6" height="2" fill="#3a3a2a"/><rect x=".8" y="5.300" width="2.200" height="1.800" fill="#fff3b0"/><rect x="10" y="5.300" width="2.200" height="1.800" fill="#fff3b0"/></svg>
<div class="t" style="left:400.7px;top:234.87px;font-size:9.6px;transform:scaleX(.95);color:#111">Daftar Produk</div>
<svg style="left:993px;top:236px" width="8" height="9" viewBox="0 0 8 9"><path d="M.3 .5 L7.700 8.500 M7.700 .5 L.3 8.500" stroke="#333" stroke-width="1"/></svg>
<div class="a" style="left:388.500px;top:254px;width:612px;height:179.500px;border:2px solid #6f6f6f;border-right:1px solid #e3e3e3;border-bottom:1px solid #e3e3e3;background:#fff"></div>
<div class="a hdr" style="left:428.2px;top:256.500px;width:99.8px;height:26px"></div>
<div class="a hdr" style="left:529.5px;top:256.500px;width:244.7px;height:26px"></div>
<div class="a hdr" style="left:775.5px;top:256.500px;width:78px;height:26px"></div>
<div class="a hdr" style="left:854.5px;top:256.500px;width:74px;height:26px"></div>
<div class="a hdr" style="left:929.5px;top:256.500px;width:56.3px;height:26px"></div>
<div class="a" style="left:428.200px;top:282px;width:557.600px;height:2px;background:#e6dcc0"></div>
<div class="t" style="left:467.8px;top:258.51px;font-size:10.5px;transform:scaleX(.86);">Kode</div><div class="t" style="left:464px;top:270.51px;font-size:10.5px;transform:scaleX(.89);">Produk</div>
<div class="t" style="left:639.6px;top:258.51px;font-size:10.5px;transform:scaleX(.89);">Nama</div><div class="t" style="left:637px;top:270.51px;font-size:10.5px;transform:scaleX(.9);">Produk</div>
<div class="t" style="left:801.3px;top:258.51px;font-size:10.5px;transform:scaleX(.91);">Harga</div><div class="t" style="left:876.3px;top:258.51px;font-size:10.5px;transform:scaleX(.9);">Satuan</div><div class="t" style="left:947.8px;top:258.51px;font-size:10.5px;transform:scaleX(.93);">Stok</div>
<div class="a" style="left:428.200px;top:284px;width:571.8px;height:16.600px;background:#0078d7"></div>
<div class="a" style="left:390.500px;top:284px;width:37px;height:16.600px;background:linear-gradient(#0c7fb4,#3c9cd0 55%,#0e80b6)"></div>
<div class="a" style="left:528.5px;top:284px;width:1px;height:16.600px;background:#dbe8f8"></div>
<div class="a" style="left:774.7px;top:284px;width:1px;height:16.600px;background:#dbe8f8"></div>
<div class="a" style="left:853.9px;top:284px;width:1px;height:16.600px;background:#dbe8f8"></div>
<div class="a" style="left:928.9px;top:284px;width:1px;height:16.600px;background:#dbe8f8"></div>
<div class="a" style="left:985.8px;top:284px;width:1px;height:16.600px;background:#dbe8f8"></div>
<div class="t" style="left:419.4px;top:286.01px;font-size:10.5px;transform:scaleX(.72);color:#fff">1</div>
<div class="t" style="left:429.2px;top:286.01px;font-size:10.5px;transform:scaleX(.86);color:#fff">JSA001</div>
<div class="t" style="left:530.1px;top:286.01px;font-size:10.5px;transform:scaleX(.91);color:#fff">Pasang Stiker</div>
<div class="t" style="left:809.2px;top:286.01px;font-size:10.5px;transform:scaleX(.93);color:#fff">50.000,00</div>
<div class="t" style="left:966.8px;top:286.01px;font-size:10.5px;transform:scaleX(.91);color:#fff">0,00</div>
<div class="a" style="left:428.200px;top:301.9px;width:557.6px;height:16.600px;background:#e8ffff"></div>
<div class="a hdr" style="left:392px;top:301.9px;width:35.500px;height:16.600px"></div>
<div class="a" style="left:528.5px;top:301.9px;width:1px;height:16.600px;background:#fff"></div>
<div class="a" style="left:774.7px;top:301.9px;width:1px;height:16.600px;background:#fff"></div>
<div class="a" style="left:853.9px;top:301.9px;width:1px;height:16.600px;background:#fff"></div>
<div class="a" style="left:928.9px;top:301.9px;width:1px;height:16.600px;background:#fff"></div>
<div class="t" style="left:419.4px;top:302.91px;font-size:10.5px;transform:scaleX(.72);color:#000">2</div>
<div class="t" style="left:429.2px;top:302.91px;font-size:10.5px;transform:scaleX(.86);color:#000">JSA002</div>
<div class="t" style="left:530.1px;top:302.91px;font-size:10.5px;transform:scaleX(.92);color:#000">Pasang Camera Parkir</div>
<div class="t" style="left:795.6px;top:302.91px;font-size:10.5px;transform:scaleX(.93);color:#000">1.500.000,00</div>
<div class="t" style="left:966.8px;top:302.91px;font-size:10.5px;transform:scaleX(.91);color:#000">0,00</div>
<div class="a" style="left:428.200px;top:319.8px;width:557.6px;height:16.600px;background:#f5e5b5"></div>
<div class="a hdr" style="left:392px;top:319.8px;width:35.500px;height:16.600px"></div>
<div class="a" style="left:528.5px;top:319.8px;width:1px;height:16.600px;background:#fff"></div>
<div class="a" style="left:774.7px;top:319.8px;width:1px;height:16.600px;background:#fff"></div>
<div class="a" style="left:853.9px;top:319.8px;width:1px;height:16.600px;background:#fff"></div>
<div class="a" style="left:928.9px;top:319.8px;width:1px;height:16.600px;background:#fff"></div>
<div class="t" style="left:419.4px;top:321.21px;font-size:10.5px;transform:scaleX(.72);color:#000">3</div>
<div class="t" style="left:429.2px;top:321.21px;font-size:10.5px;transform:scaleX(.83);color:#000">PRD001</div>
<div class="t" style="left:530.1px;top:321.21px;font-size:10.5px;transform:scaleX(.9);color:#000">SUSU beruang</div>
<div class="t" style="left:809.2px;top:321.21px;font-size:10.5px;transform:scaleX(.95);color:#000">11.000,00</div>
<div class="t" style="left:855px;top:321.21px;font-size:10.5px;transform:scaleX(.78);color:#000">PCS</div>
<div class="t" style="left:961.4px;top:321.21px;font-size:10.5px;transform:scaleX(.91);color:#000">27,00</div>
<div class="a" style="left:428.200px;top:337.7px;width:557.6px;height:16.600px;background:#e8ffff"></div>
<div class="a hdr" style="left:392px;top:337.7px;width:35.500px;height:16.600px"></div>
<div class="a" style="left:528.5px;top:337.7px;width:1px;height:16.600px;background:#fff"></div>
<div class="a" style="left:774.7px;top:337.7px;width:1px;height:16.600px;background:#fff"></div>
<div class="a" style="left:853.9px;top:337.7px;width:1px;height:16.600px;background:#fff"></div>
<div class="a" style="left:928.9px;top:337.7px;width:1px;height:16.600px;background:#fff"></div>
<div class="t" style="left:419.4px;top:338.11px;font-size:10.5px;transform:scaleX(.72);color:#000">4</div>
<div class="t" style="left:429.2px;top:338.11px;font-size:10.5px;transform:scaleX(.83);color:#000">PRD002</div>
<div class="t" style="left:530.1px;top:338.11px;font-size:10.5px;transform:scaleX(.85);color:#000">TEH BOTOL</div>
<div class="t" style="left:814.6px;top:338.11px;font-size:10.5px;transform:scaleX(.93);color:#000">5.000,00</div>
<div class="t" style="left:855px;top:338.11px;font-size:10.5px;transform:scaleX(.78);color:#000">PCS</div>
<div class="t" style="left:961.4px;top:338.11px;font-size:10.5px;transform:scaleX(.91);color:#000">16,00</div>
<div class="a" style="left:428.200px;top:355.6px;width:557.6px;height:16.600px;background:#f5e5b5"></div>
<div class="a hdr" style="left:392px;top:355.6px;width:35.500px;height:16.600px"></div>
<div class="a" style="left:528.5px;top:355.6px;width:1px;height:16.600px;background:#fff"></div>
<div class="a" style="left:774.7px;top:355.6px;width:1px;height:16.600px;background:#fff"></div>
<div class="a" style="left:853.9px;top:355.6px;width:1px;height:16.600px;background:#fff"></div>
<div class="a" style="left:928.9px;top:355.6px;width:1px;height:16.600px;background:#fff"></div>
<div class="t" style="left:419.4px;top:356.01px;font-size:10.5px;transform:scaleX(.72);color:#000">5</div>
<div class="t" style="left:429.2px;top:356.01px;font-size:10.5px;transform:scaleX(.83);color:#000">PRD003</div>
<div class="t" style="left:530.1px;top:356.01px;font-size:10.5px;transform:scaleX(.89);color:#000">FANTA</div>
<div class="t" style="left:814.6px;top:356.01px;font-size:10.5px;transform:scaleX(.93);color:#000">5.000,00</div>
<div class="t" style="left:855px;top:356.01px;font-size:10.5px;transform:scaleX(.79);color:#000">BTL</div>
<div class="t" style="left:966.8px;top:356.01px;font-size:10.5px;transform:scaleX(.91);color:#000">0,00</div>
<svg style="left:390px;top:285.5px" width="20" height="14" viewBox="0 0 20 14"><rect x="0.500" y="5.500" width="2.500" height="7.500" fill="#f4f6f8" stroke="#3a6ab8" stroke-width=".5"/><path d="M4.200 5 Q5 2.500 8 1.800 Q10 1.500 11 2.800 L17 3 Q18 3.200 18 4.300 Q18 5.400 17 5.500 L11.800 5.700 Q12.600 6.200 12.400 7.200 Q13 8 12.400 8.800 Q12.800 9.800 12 10.400 Q12 11.800 10.800 12.200 L6 12.800 Q4.200 12.500 4.200 10.500 Z" fill="#ecdcae" stroke="#d9a050" stroke-width=".7"/><path d="M10 7.200h2.200M10 8.900h2.200M10 10.500h1.800" stroke="#c8873a" stroke-width=".6"/><path d="M6 4 Q8 2.500 10 3" stroke="#fff" stroke-width=".8" fill="none"/></svg>
<div class="a" style="left:386px;top:449px;width:231px;height:65.500px;border:1px solid #e1e1e1"></div>
<div class="a" style="left:392px;top:444px;width:25px;height:10px;background:#ebebeb"></div>
<div class="t" style="left:394.4px;top:444.51px;font-size:9.2px;transform:scaleX(1.06);font-weight:bold;color:#ff0a0a">Find</div>
<div class="a" style="left:395.300px;top:460px;width:10.500px;height:10.500px;border-radius:50%;border:1px solid #333;background:#fff"></div><div class="a" style="left:398.200px;top:462.900px;width:4.700px;height:4.700px;border-radius:50%;background:#222"></div>
<div class="t" style="left:410.8px;top:461.61px;font-size:9.2px;transform:scaleX(1.03);color:#111">Nama</div>
<div class="a" style="left:476.200px;top:460px;width:10.500px;height:10.500px;border-radius:50%;border:1px solid #333;background:#fff"></div>
<div class="t" style="left:492.5px;top:461.61px;font-size:9.2px;color:#111">Kode</div>
<div class="a" style="left:395px;top:473px;width:217px;height:17px;border:1px solid #2f8ae2;background:#fff"></div>
<div class="a" style="left:398px;top:476px;width:1px;height:11px;background:#222"></div>
<div class="a" style="left:395px;top:500px;width:10px;height:10px;border:1px solid #333;background:#fff"></div>
<div class="t" style="left:409.9px;top:501.19px;font-size:8.4px;transform:scaleX(1.04);color:#111">Match any other characters</div>
<div class="a" style="left:618px;top:449px;width:116px;height:65.500px;border:1px solid #e1e1e1"></div>
<div class="a" style="left:624px;top:444px;width:29px;height:10px;background:#ebebeb"></div>
<div class="t" style="left:625.7px;top:444.55px;font-size:8.8px;transform:scaleX(.91);font-weight:bold;color:#ff0a0a"><u>A</u>ction</div>
<div class="wbtn" style="left:631px;top:462px;width:42px"></div><div class="wbtn" style="left:677px;top:462px;width:42px"></div>
<div class="wbtn" style="left:631px;top:484px;width:42px;border:1.500px solid #0a7ad8"></div><div class="wbtn" style="left:677px;top:484px;width:42px"></div>
<div class="t" style="left:635.6px;top:464.75px;font-size:8.8px;transform:scaleX(.94);font-weight:bold;color:#111">Retrieve</div><div class="t" style="left:687.8px;top:464.75px;font-size:8.8px;transform:scaleX(.97);color:#111">Clear</div>
<div class="t" style="left:646.8px;top:486.95px;font-size:8.8px;transform:scaleX(.91);color:#111">OK</div><div class="t" style="left:687px;top:486.95px;font-size:8.8px;transform:scaleX(.96);color:#111">Close</div>

</body></html>
